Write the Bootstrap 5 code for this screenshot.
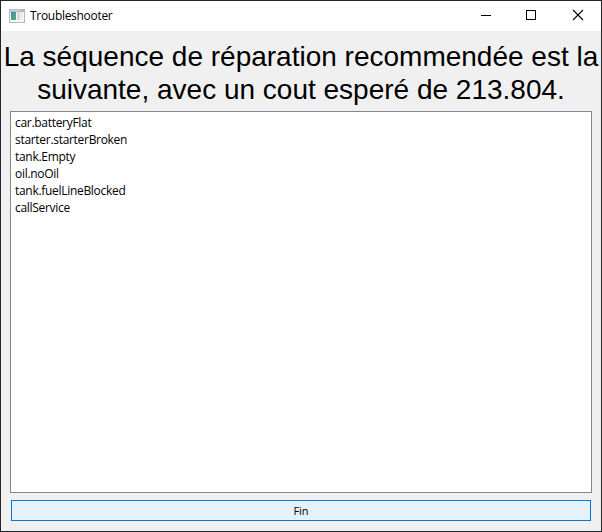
<!DOCTYPE html>
<html lang="fr">
<head>
<meta charset="utf-8">
<meta name="viewport" content="width=device-width, initial-scale=1">
<title>Troubleshooter</title>
<link href="https://cdn.jsdelivr.net/npm/bootstrap@5.3.0/dist/css/bootstrap.min.css" rel="stylesheet">
<style>
body { overflow: hidden; font-family: "Segoe UI", "Open Sans", "Noto Sans", sans-serif; font-size: 12px; color: #000; }
.app-window { height: 532px; background: #f0f0f0; border: 1px solid #23252b; }
.title-bar { height: 30px; padding-left: 8px; }
.app-name { font-size: 12px; line-height: 16px; letter-spacing: -.3px; margin-left: 5px; }
.win-btn { width: 46px; height: 30px; }
.headline { font: 28px/33px "Liberation Sans", Arial, sans-serif; height: 66px; margin: 9px 0 5px; white-space: nowrap; }
.steps { margin: 0 9px; height: 382px; border: 1px solid #828790; padding: 2px 4px; }
.steps .list-group-item { height: 17px; line-height: 17px; letter-spacing: -.3px; }
.finish { margin: 7px 10px 0; height: 21px; border: 1px solid #0078d7; background: #e5f1fb; font-size: 11px; line-height: 19px; color: #000; }
</style>
</head>
<body>
<main class="app-window d-flex flex-column">
  <header class="title-bar bg-white d-flex align-items-center flex-shrink-0">
    <svg width="16" height="14" viewBox="0 0 16 14" shape-rendering="crispEdges" aria-hidden="true">
      <defs><linearGradient id="pane" x1="0" y1="0" x2="1" y2="1"><stop offset="0" stop-color="#4a84a8"/><stop offset="1" stop-color="#58b080"/></linearGradient></defs>
      <path fill="#b4b8bb" d="M0 0h16v14H0z"/>
      <path fill="#d5d8da" d="M1 1h10v1H1z"/>
      <path fill="#f7f7f7" d="M1 3h14v10H1z"/>
      <path fill="url(#pane)" d="M2 3h5v8H2z"/>
      <path fill="#d8dbdd" d="M8 3h3v8H8z"/>
      <path fill="#e8eaeb" d="M12 3h2v8h-2z"/>
    </svg>
    <span class="app-name">Troubleshooter</span>
    <div class="d-flex ms-auto">
      <button class="win-btn btn p-0 border-0 rounded-0 d-flex" aria-label="Réduire"><svg width="46" height="30" shape-rendering="crispEdges"><path d="M18 14h10v1H18z"/></svg></button>
      <button class="win-btn btn p-0 border-0 rounded-0 d-flex" aria-label="Agrandir"><svg width="46" height="30" shape-rendering="crispEdges"><path d="M17.5 9.5h9v9h-9z" fill="none" stroke="#000"/></svg></button>
      <button class="win-btn btn p-0 border-0 rounded-0 d-flex" aria-label="Fermer"><svg width="46" height="30"><path d="M18 9l10 10M28 9L18 19" fill="none" stroke="#000" stroke-width="1.1"/></svg></button>
    </div>
  </header>
  <h1 class="headline text-center flex-shrink-0">La séquence de réparation recommendée est la<br>suivante, avec un cout esperé de 213.804.</h1>
  <ul class="steps list-group list-group-flush rounded-0 bg-white flex-shrink-0">
    <li class="list-group-item border-0 p-0 text-black">car.batteryFlat</li>
    <li class="list-group-item border-0 p-0 text-black">starter.starterBroken</li>
    <li class="list-group-item border-0 p-0 text-black">tank.Empty</li>
    <li class="list-group-item border-0 p-0 text-black">oil.noOil</li>
    <li class="list-group-item border-0 p-0 text-black">tank.fuelLineBlocked</li>
    <li class="list-group-item border-0 p-0 text-black">callService</li>
  </ul>
  <button class="finish btn rounded-0 p-0 flex-shrink-0">Fin</button>
</main>
<script src="https://cdn.jsdelivr.net/npm/bootstrap@5.3.0/dist/js/bootstrap.bundle.min.js"></script>
</body>
</html>
